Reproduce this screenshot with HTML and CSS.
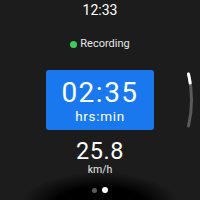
FILE: index.html
```html
<!DOCTYPE html>
<html lang="en">
<head>
<meta charset="utf-8">
<link rel="stylesheet" href="styles.css">
</head>
<body>
<main class="screen">
  <div class="clock">12:33</div>
  <div class="status"><span class="dot"></span><span class="status-text">Recording</span></div>
  <section class="tile">
    <div class="tile-value">02:35</div>
    <div class="tile-unit">hrs:min</div>
  </section>
  <div class="metric">
    <div class="metric-value">25.8</div>
    <div class="metric-unit">km/h</div>
  </div>
  <div class="pager"><span class="pdot"></span><span class="pdot active"></span></div>
  <svg class="scroll" width="200" height="200" viewBox="0 0 200 200">
    <path d="M188.5 74 A114 114 0 0 1 188.5 126" fill="none" stroke="#5a5a5a" stroke-width="3" stroke-linecap="round"/>
    <path d="M188.5 74 A114 114 0 0 1 190.2 83" fill="none" stroke="#ffffff" stroke-width="3" stroke-linecap="round"/>
  </svg>
</main>
</body>
</html>
```
FILE: styles.css
```css
html, body {
  margin: 0;
  padding: 0;
  width: 200px;
  height: 200px;
  overflow: hidden;
  background: #1c1c1c;
}
.screen {
  position: relative;
  width: 200px;
  height: 200px;
  display: flex;
  flex-direction: column;
  align-items: center;
  font-family: Roboto, "Liberation Sans", sans-serif;
  color: #ffffff;
  background: radial-gradient(ellipse 80px 34px at 100px 206px, #000 55%, rgba(0,0,0,0) 100%), #1c1c1c;
}
.clock {
  margin-top: 2px;
  font-size: 14px;
  line-height: 16px;
}
.status {
  margin-top: 19px;
  height: 13px;
  display: flex;
  align-items: center;
  gap: 3px;
}
.dot {
  width: 7px;
  height: 7px;
  border-radius: 50%;
  background: #3dcc5a;
  margin-top: 1px;
}
.status-text {
  font-size: 11px;
  line-height: 13px;
  color: #e6e6e6;
}
.tile {
  margin-top: 20px;
  width: 108px;
  height: 60px;
  box-sizing: border-box;
  padding-top: 9px;
  background: #1a78ef;
  border-radius: 3px;
  display: flex;
  flex-direction: column;
  align-items: center;
}
.tile-value {
  font-size: 28px;
  line-height: 28px;
  letter-spacing: 1.5px;
}
.tile-unit {
  margin-top: 2px;
  font-size: 13.5px;
  line-height: 14px;
  letter-spacing: 0.7px;
}
.metric {
  margin-top: 9px;
  display: flex;
  flex-direction: column;
  align-items: center;
}
.metric-value {
  font-size: 23.5px;
  line-height: 24px;
  letter-spacing: 0.5px;
}
.metric-unit {
  margin-top: 1px;
  font-size: 10.5px;
  line-height: 11px;
  color: #e6e6e6;
}
.pager {
  margin-top: 12px;
  display: flex;
  align-items: center;
  gap: 5px;
}
.pdot {
  width: 5px;
  height: 5px;
  border-radius: 50%;
  background: #5c5c5c;
}
.pdot.active {
  width: 6px;
  height: 6px;
  background: #ffffff;
}
.scroll {
  position: absolute;
  left: 0;
  top: 0;
}
```
